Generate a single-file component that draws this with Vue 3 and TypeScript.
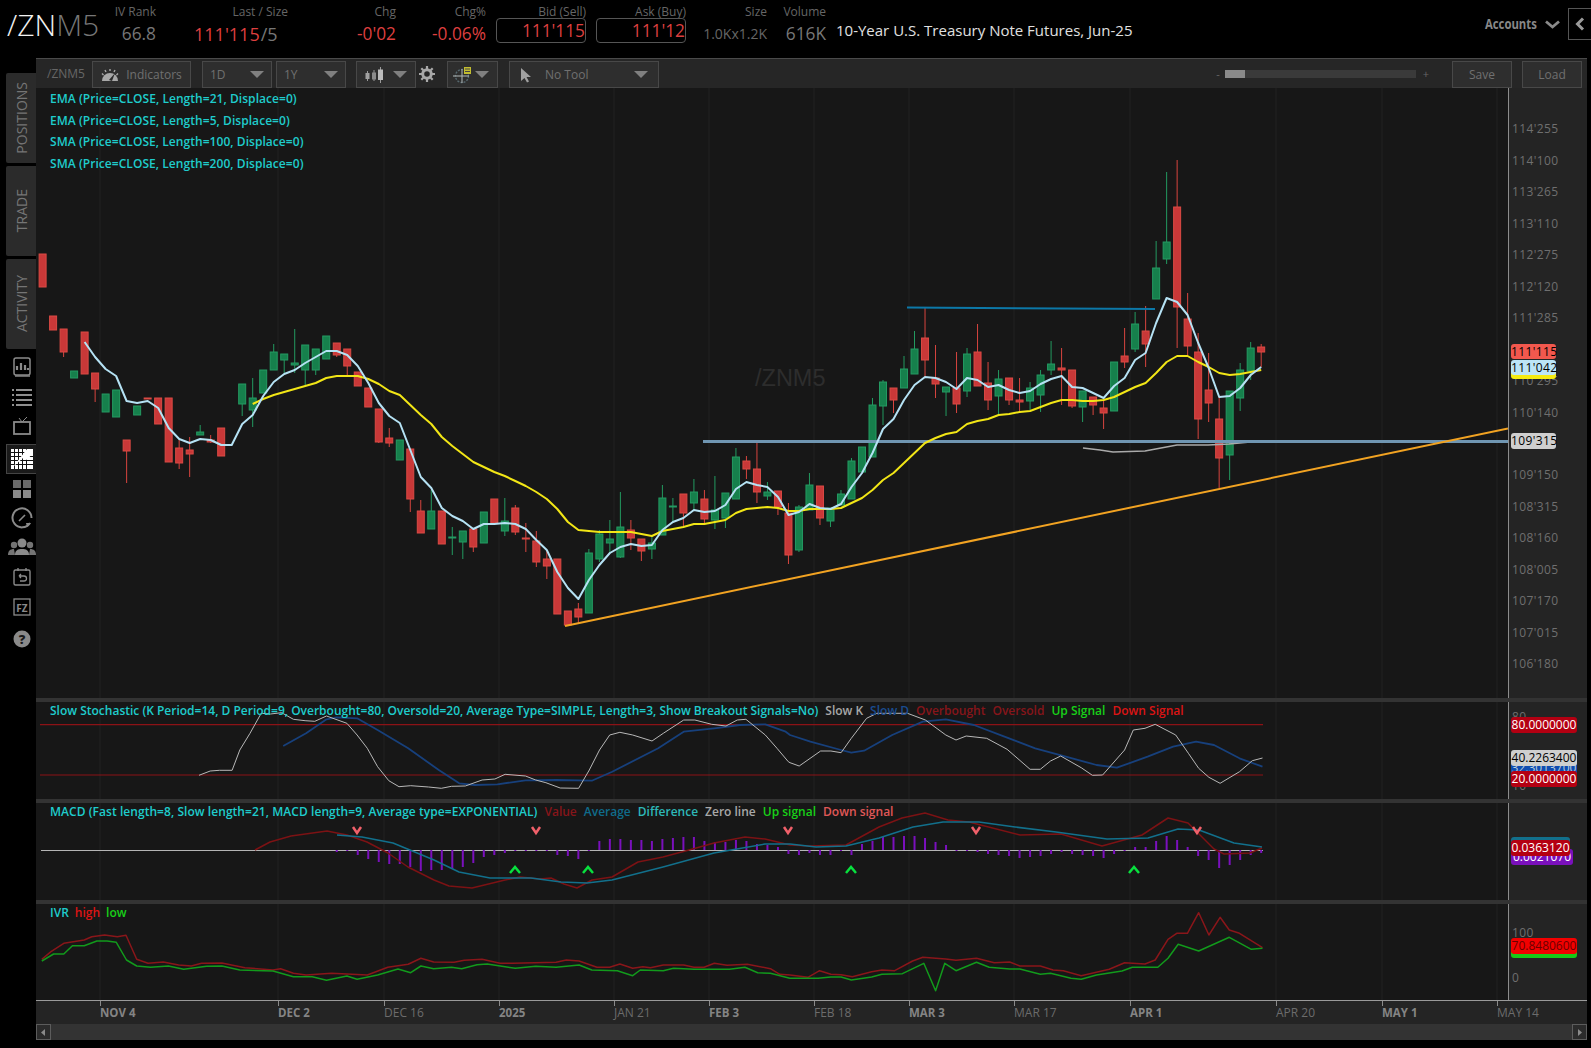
<script setup lang="ts">
type Candle = [number, number, number, number, 'r' | 'g'] | null

// high, body top, body bottom, low, colour — index is the bar number
const bars: Candle[] = [
  [254, 254, 287, 287, 'r'], [316, 316, 330, 330, 'r'], [329, 329, 352, 357, 'r'], [371, 371, 378, 378, 'g'],
  [332, 332, 374, 374, 'r'], [373, 373, 389, 402, 'r'], [394, 394, 412, 412, 'g'], [390, 390, 417, 417, 'g'],
  [440, 440, 451, 483, 'r'], [406, 406, 415, 415, 'g'], [398, 398, 399, 399, 'r'], [398, 398, 424, 424, 'r'],
  [398, 398, 462, 462, 'r'], [440, 448, 463, 469, 'r'], [437, 450, 454, 477, 'r'], [425, 432, 435, 435, 'g'],
  [435, 440, 442, 443, 'r'], [428, 428, 456, 456, 'r'], null, [384, 384, 404, 416, 'g'],
  [378, 398, 410, 427, 'g'], [370, 370, 393, 393, 'g'], [344, 352, 370, 370, 'g'], [354, 354, 360, 373, 'g'],
  [329, 363, 365, 373, 'g'], [345, 345, 370, 385, 'g'], [349, 349, 370, 375, 'g'], [336, 336, 359, 359, 'g'],
  [343, 343, 355, 357, 'r'], [349, 349, 366, 377, 'r'], [372, 372, 386, 386, 'r'], [388, 388, 407, 407, 'r'],
  [409, 409, 442, 443, 'r'], [428, 438, 443, 447, 'r'], [440, 440, 460, 460, 'g'], [449, 449, 499, 512, 'r'],
  [500, 511, 533, 533, 'r'], [490, 511, 529, 529, 'g'], [511, 511, 544, 544, 'r'], [527, 537, 538, 555, 'g'],
  [531, 531, 542, 559, 'g'], [529, 529, 547, 552, 'r'], [512, 512, 543, 543, 'g'], [499, 499, 523, 523, 'r'],
  [498, 521, 531, 536, 'g'], [505, 508, 532, 535, 'r'], [523, 538, 539, 552, 'r'], [531, 541, 562, 567, 'r'],
  [550, 559, 566, 579, 'r'], [559, 559, 614, 614, 'r'], [611, 611, 625, 625, 'r'], [603, 609, 617, 623, 'r'],
  [549, 553, 613, 613, 'g'], [530, 534, 559, 562, 'g'], [520, 539, 543, 553, 'g'], [492, 527, 557, 558, 'g'],
  [520, 530, 538, 550, 'r'], [539, 539, 551, 561, 'r'], [535, 543, 549, 559, 'g'], [485, 498, 535, 535, 'g'],
  [498, 506, 507, 522, 'g'], [494, 494, 513, 527, 'r'], [479, 492, 503, 510, 'g'], [490, 499, 519, 523, 'r'],
  [476, 510, 520, 529, 'g'], [493, 493, 518, 528, 'g'], [448, 457, 499, 499, 'g'], [456, 461, 469, 479, 'r'],
  [441, 469, 492, 503, 'r'], [482, 492, 496, 500, 'g'], [491, 491, 507, 515, 'r'], [503, 513, 555, 564, 'r'],
  [505, 507, 550, 552, 'g'], [473, 485, 510, 510, 'g'], [486, 486, 518, 525, 'r'], [508, 508, 521, 527, 'g'],
  [490, 494, 505, 505, 'g'], [458, 461, 499, 499, 'g'], [447, 447, 472, 472, 'g'], [398, 405, 457, 457, 'g'],
  [380, 382, 406, 425, 'g'], [388, 388, 400, 413, 'r'], [356, 369, 388, 388, 'g'], [331, 349, 374, 374, 'g'],
  [308, 338, 360, 378, 'r'], [345, 378, 384, 398, 'r'], [387, 387, 392, 416, 'g'], [352, 388, 404, 413, 'r'],
  [348, 354, 391, 397, 'g'], [324, 352, 386, 386, 'r'], [362, 383, 400, 410, 'r'], [370, 379, 396, 415, 'g'],
  [378, 378, 400, 405, 'r'], [378, 400, 402, 412, 'r'], [382, 388, 401, 410, 'g'], [370, 375, 395, 412, 'g'],
  [341, 364, 370, 375, 'g'], [348, 368, 370, 405, 'r'], [370, 370, 406, 408, 'r'], [391, 391, 407, 422, 'g'],
  [397, 397, 405, 415, 'r'], [400, 408, 413, 429, 'r'], [362, 362, 411, 411, 'g'], [328, 356, 362, 368, 'r'],
  [312, 324, 349, 352, 'g'], [306, 331, 344, 367, 'r'], [241, 268, 299, 299, 'g'], [172, 242, 259, 264, 'g'],
  [160, 207, 307, 348, 'r'], [293, 319, 346, 355, 'r'], [333, 352, 419, 439, 'r'], [353, 390, 403, 422, 'r'],
  [397, 419, 458, 488, 'r'], [391, 391, 455, 480, 'g'], [363, 370, 398, 411, 'g'], [342, 348, 371, 380, 'g'],
  [344, 347, 352, 367, 'r'],
]

const barX = (i: number) => 42.6 + i * 10.505

const ema5 = [
  342, 357, 369, 376, 401, 403, 401, 408, 428, 439, 443, 439, 440, 445, 445, 424, 415, 396, 382, 374, 370, 363, 357, 351,
  351, 355, 366, 383, 403, 416, 423, 450, 477, 488, 508, 516, 521, 529, 524, 524, 523, 524, 529, 540, 550, 572, 588, 599,
  580, 565, 553, 547, 544, 546, 545, 530, 522, 518, 510, 512, 511, 505, 489, 482, 485, 487, 497, 515, 512, 504, 508, 509,
  504, 487, 473, 453, 429, 419, 400, 385, 377, 378, 382, 389, 378, 380, 387, 385, 390, 393, 391, 384, 379, 376, 387, 388,
  393, 398, 386, 378, 360, 353, 323, 298, 302, 315, 343, 368, 397, 396, 388, 375, 367,
]
const ema21 = [
  404, 399, 395, 392, 389, 386, 383, 378, 376, 376, 376, 379, 384, 391, 395, 405, 415, 424, 437, 446, 454, 462, 467, 472,
  476, 481, 486, 492, 499, 509, 522, 530, 531, 532, 532, 532, 532, 534, 536, 531, 529, 527, 524, 524, 522, 520, 513, 509,
  508, 507, 508, 511, 511, 509, 509, 509, 508, 503, 498, 490, 480, 473, 463, 453, 443, 438, 434, 432, 424, 421, 419, 415,
  414, 412, 411, 407, 403, 400, 400, 401, 401, 400, 397, 392, 387, 383, 373, 362, 356, 356, 362, 367, 373, 375, 374, 372, 370,
]

const seriesPath = (ys: number[], from: number) => ys.map((y, i) => `${barX(from + i).toFixed(1)},${y}`).join(' ')
const ema5Path = seriesPath(ema5, 4)
const ema21Path = seriesPath(ema21, 20)

// studies were traced off 3x crops, so the numbers come in crop units
type Pt = [number, number]
const fromCrop = (pts: Pt[], x0: number, sx: number, y0: number) =>
  pts.map(([x, y]) => `${(x0 + x / sx).toFixed(1)},${(y0 + y / 3).toFixed(1)}`).join(' ')

const stochK = fromCrop([[390,256],[412,243],[430,241],[455,241],[470,180],[490,130],[512,70],[530,72],[552,68],[575,88],[598,92],[617,94],[640,78],[680,100],[700,135],[720,175],[740,230],[762,272],[782,290],[805,287],[840,291],[865,295],[885,289],[912,288],[945,270],[970,267],[990,253],[1030,258],[1050,270],[1070,278],[1098,294],[1134,295],[1155,240],[1175,180],[1195,135],[1215,127],[1240,135],[1278,153],[1300,130],[1340,90],[1362,90],[1395,103],[1423,108],[1445,90],[1462,88],[1500,135],[1523,175],[1545,215]], 0, 1.96, 690)
  + ' ' + fromCrop([[0,218],[18,228],[60,183],[80,183],[100,188],[120,145],[150,85],[170,70],[230,70],[265,90],[305,135],[325,150],[345,138],[385,145],[425,178],[470,238],[490,238],[510,213],[530,198],[570,233],[592,256],[612,255],[655,180],[672,120],[695,115],[715,103],[755,135],[780,190],[800,235],[820,262],[842,280],[880,245],[905,212],[925,204]], 790, 1.9576, 690)
const stochD = fromCrop([[555,168],[600,130],[640,88],[660,82],[700,85],[740,120],[800,175],[860,240],[900,280],[930,285],[975,283],[1030,271],[1090,270],[1160,272],[1200,245],[1290,175],[1340,125],[1400,115],[1450,105],[1500,103],[1540,125]], 0, 1.96, 690)
  + ' ' + fromCrop([[0,135],[40,155],[100,180],[120,188],[145,182],[200,135],[260,95],[305,88],[360,105],[420,140],[480,175],[540,200],[600,225],[640,233],[700,200],[750,170],[795,155],[830,165],[880,205],[925,230]], 790, 1.9576, 690)

const macdValue = '255,850 270,842 291,836 327,831 347,835 367,842 388,853 408,867 434,880 449,886 472,888 505,880 520,877 540,879 551,878 564,884 577,888 592,880 612,877 638,862 663,857 689,850 714,843 745,837 765,839 790,845 810,846 846,845 879,827 902,818 925,813 948,820 969,822 1020,835 1061,834 1102,846 1142,835 1168,818 1188,823 1214,849 1224,854 1250,853 1262,848'
const macdAvg = '337,835 362,837 393,843 434,860 459,872 490,878 531,878 561,882 587,883 612,880 663,867 714,853 765,844 790,844 816,847 846,846 879,838 913,827 943,822 979,822 1015,827 1056,832 1107,839 1148,838 1178,829 1199,830 1234,843 1262,847'

// histogram from bar 28: positive hangs below the zero line
const histo = [
  2, 1, 5, 9, 12, 14, 14, 17, 21, 20, 20, 19, 17, 13, 7, 5, 3, 0, 1, 0, 0, 5, 6, 9, 1,
  -9, -11, -11, -10, -10, -9, -11, -12, -13, -13, -9, -8, -8, -10, -9, -6, -5, -3, 4, 5, 3, 5, 5, 1, 5,
  -6, -9, -13, -13, -14, -14, -12, -8, -5, 0, 0, 2, 4, 5, 6, 8, 7, 6, 4, 2, 4, 5, 6, 8, 4, 0,
  -3, -3, -9, -14, -10, -3, 6, 10, 18, 15, 10, 5, 3,
]
const histoBars = histo.map((h, i) => ({ x: barX(28 + i) - 1, y: h < 0 ? 850 + h : 850, h: Math.max(Math.abs(h), 1) }))

const downMarks = [[357, 830], [536, 830], [788, 830], [976, 830], [1197, 830]]
const upMarks = [[515, 870], [588, 870], [851, 870], [1134, 870]]

const ivrHigh = fromCrop([[82,238],[100,215],[125,190],[165,180],[180,170],[205,165],[230,170],[247,166],[268,238],[290,250],[320,246],[350,255],[375,258],[395,250],[435,249],[480,263],[535,270],[550,266],[575,280],[600,285],[650,280],[720,285],[760,262],[800,253],[825,235],[850,246],[890,247],[910,241],[945,238],[980,250],[1005,250],[1090,247],[1110,240],[1135,243],[1170,262],[1195,262],[1215,252],[1240,265],[1260,260],[1275,263],[1300,255],[1340,255],[1360,262],[1380,262],[1400,250],[1425,256],[1465,253],[1510,266]], 0, 1.96, 880)
  + ' ' + fromCrop([[-20,283],[0,285],[35,292],[58,272],[80,283],[100,284],[122,290],[160,275],[180,270],[205,272],[240,243],[260,232],[305,237],[325,241],[365,235],[400,248],[430,246],[450,258],[490,258],[515,270],[535,272],[570,287],[625,268],[655,248],[695,252],[715,240],[740,178],[757,160],[778,160],[800,98],[820,165],[842,112],[860,150],[880,160],[925,203]], 790, 1.9576, 880)
const ivrLow = fromCrop([[82,243],[105,222],[125,222],[142,197],[165,197],[190,183],[210,183],[228,187],[248,240],[268,258],[295,262],[330,258],[360,268],[405,259],[435,258],[470,270],[535,273],[575,290],[612,290],[640,301],[680,288],[700,298],[740,285],[780,267],[805,278],[825,258],[850,266],[885,262],[905,266],[935,254],[955,252],[1010,265],[1050,259],[1090,262],[1135,255],[1160,270],[1210,272],[1240,287],[1255,270],[1300,272],[1320,265],[1360,268],[1430,268],[1460,262],[1485,278],[1510,280],[1548,295]], 0, 1.96, 880)
  + ' ' + fromCrop([[0,295],[55,295],[80,291],[100,291],[120,300],[160,291],[180,283],[220,281],[262,250],[285,332],[303,250],[325,272],[365,247],[390,262],[430,267],[450,267],[490,283],[510,280],[550,295],[570,298],[600,285],[650,273],[670,262],[720,262],[740,235],[760,193],[800,213],[860,172],[903,208],[925,205]], 790, 1.9576, 880)

const dates = [
  { x: 100, label: 'NOV 4', bold: true }, { x: 278, label: 'DEC 2', bold: true }, { x: 384, label: 'DEC 16', bold: false },
  { x: 499, label: '2025', bold: true }, { x: 614, label: 'JAN 21', bold: false }, { x: 709, label: 'FEB 3', bold: true },
  { x: 814, label: 'FEB 18', bold: false }, { x: 909, label: 'MAR 3', bold: true }, { x: 1014, label: 'MAR 17', bold: false },
  { x: 1130, label: 'APR 1', bold: true }, { x: 1276, label: 'APR 20', bold: false }, { x: 1382, label: 'MAY 1', bold: true },
  { x: 1497, label: 'MAY 14', bold: false },
]

const prices: [string, number][] = [
  ["114'255", 129], ["114'100", 161], ["113'265", 192], ["113'110", 224], ["112'275", 255], ["112'120", 287],
  ["111'285", 318], ["110'295", 381], ["110'140", 413], ["109'150", 475], ["108'315", 507], ["108'160", 538],
  ["108'005", 570], ["107'170", 601], ["107'015", 633], ["106'180", 664],
]

const emaLegends = [
  'EMA (Price=CLOSE, Length=21, Displace=0)',
  'EMA (Price=CLOSE, Length=5, Displace=0)',
  'SMA (Price=CLOSE, Length=100, Displace=0)',
  'SMA (Price=CLOSE, Length=200, Displace=0)',
]
const railTabs = ['POSITIONS', 'TRADE', 'ACTIVITY']
</script>

<template>
  <div class="app">
    <header class="top">
      <div class="sym"><span class="sym-a">/ZN</span><span class="sym-b">M5</span></div>
      <div class="q q-iv"><span class="lab">IV Rank</span><span class="val">66.8</span></div>
      <div class="q q-last">
        <span class="lab">Last / Size</span>
        <span class="val val-last last-row"><span class="red">111'115</span><span class="slash">/5</span></span>
      </div>
      <div class="q q-chg"><span class="lab">Chg</span><span class="val red">-0'02</span></div>
      <div class="q q-pct"><span class="lab">Chg%</span><span class="val red">-0.06%</span></div>
      <div class="q q-box"><span class="lab">Bid (Sell)</span><span class="val red box">111'115</span></div>
      <div class="q q-box"><span class="lab">Ask (Buy)</span><span class="val red box">111'12</span></div>
      <div class="q q-size"><span class="lab">Size</span><span class="val small">1.0Kx1.2K</span></div>
      <div class="q q-vol"><span class="lab">Volume</span><span class="val">616K</span></div>
      <div class="desc">10-Year U.S. Treasury Note Futures, Jun-25</div>
      <div class="accounts">
        <span class="accounts-text">Accounts</span>
        <svg width="15" height="9" viewBox="0 0 15 9"><path d="M1 1.500 7.500 7 14 1.500" fill="none" stroke="#8a8a8a" stroke-width="2.800" /></svg>
      </div>
      <div class="collapse">
        <svg width="10" height="14" viewBox="0 0 10 14"><path d="M8 1.500 2.500 7 8 12.500" fill="none" stroke="#9a9a9a" stroke-width="3" /></svg>
      </div>
    </header>

    <div class="body">
      <nav class="rail">
        <div v-for="t in railTabs" :key="t" class="tab" :class="'tab-' + t.toLowerCase()"><span>{{ t }}</span></div>
        <svg class="ico" viewBox="0 0 24 24"><rect x="4" y="3" width="16" height="17" rx="2" fill="none" stroke="#8a8a8a" stroke-width="1.500" /><path d="M7 15v-4M11 15V8M15 15v-5M18 15v-2" stroke="#8a8a8a" stroke-width="2.200" /><path d="M5 21h15" stroke="#8a8a8a" stroke-width="1.500" /></svg>
        <svg class="ico" viewBox="0 0 24 24"><path d="M6 5h16M6 10h16M6 15h16M6 20h16" stroke="#8f8f8f" stroke-width="2" /><path d="M2 5h2M2 10h2M2 15h2M2 20h2" stroke="#8f8f8f" stroke-width="2" /></svg>
        <svg class="ico" viewBox="0 0 24 24"><rect x="4" y="8" width="16" height="12" fill="none" stroke="#8a8a8a" stroke-width="1.800" /><path d="M12 8 9 4M12 8l5-5" stroke="#8a8a8a" /></svg>
        <div class="ico-active">
          <svg width="22" height="20" viewBox="0 0 22 20"><rect width="22" height="20" fill="#fff" /><path d="M3.500 0v20M7.500 0v20M11.500 0v20M15.500 0v20M0 3.500h22M0 7.500h22M0 11.500h22M0 15.500h22" stroke="#111" /><path d="M2 18 12 9l4 2 6-7v-4h-6z" fill="#fff" /></svg>
        </div>
        <svg class="ico" viewBox="0 0 24 24"><rect x="3" y="3" width="8" height="8" fill="#6a6a6a" /><rect x="13" y="3" width="8" height="8" fill="#6a6a6a" /><rect x="3" y="13" width="8" height="8" fill="#8a8a8a" /><rect x="13" y="13" width="8" height="8" fill="#8a8a8a" /></svg>
        <svg class="ico" viewBox="0 0 24 24"><path d="M20 17A9.500 9.500 0 1 1 21.500 12" fill="none" stroke="#8a8a8a" stroke-width="2" /><path d="M17 21l4-4h-5z" fill="#8a8a8a" /><path d="M12 12 9 15M12 12l3-3" stroke="#8a8a8a" stroke-width="1.600" /></svg>
        <svg class="ico ico-wide" viewBox="0 0 28 24"><circle cx="14" cy="7" r="4.500" fill="#8a8a8a" /><path d="M7 19c0-5 3-6 7-6s7 1 7 6z" fill="#8a8a8a" /><circle cx="6" cy="9" r="3.200" fill="#747474" /><circle cx="22" cy="9" r="3.200" fill="#747474" /><path d="M0 19c0-4 2-6 6-6l1 6zM28 19c0-4-2-6-6-6l-1 6z" fill="#747474" /></svg>
        <svg class="ico" viewBox="0 0 24 24"><rect x="4" y="5" width="16" height="15" rx="1.500" fill="none" stroke="#8a8a8a" stroke-width="1.400" /><path d="M8 3v3M16 3v3" stroke="#8a8a8a" stroke-width="1.400" /><path d="M9 11h5a2.500 2.500 0 0 1 0 5h-4M9 11l2-2M9 11l2 2" fill="none" stroke="#8a8a8a" stroke-width="1.300" /></svg>
        <svg class="ico ico-fz" viewBox="0 0 24 24"><rect x="4" y="4" width="16" height="16" fill="none" stroke="#8a8a8a" stroke-width="1.300" /><text x="12" y="16.500" text-anchor="middle" class="ico-text">FZ</text></svg>
        <svg class="ico" viewBox="0 0 24 24"><circle cx="12" cy="12" r="8.500" fill="#8a8a8a" /><text x="12" y="16.500" text-anchor="middle" class="ico-help">?</text></svg>
      </nav>

      <main class="frame">
        <div class="toolbar">
          <span class="tb-sym">/ZNM5</span>
          <button class="btn btn-ind">
            <svg width="18" height="16" viewBox="0 0 18 16"><path d="M1 14a8 8 0 0 1 16 0z" fill="#a8a8a8" /><path d="M2.500 8 1 6.500M5 5 4 3M9 4V2M13 5l1-2M15.500 8 17 6.500" stroke="#a8a8a8" stroke-width="1.400" /><path d="M8 13l6-7-3 8z" fill="#2a2a2a" /></svg>
            Indicators
          </button>
          <div class="dd dd-period">1D<i /></div>
          <div class="dd dd-period dd-next">1Y<i /></div>
          <div class="dd dd-type">
            <svg width="19" height="16" viewBox="0 0 19 16"><path d="M2.500 4v10M9 3v11M15.500 0v16" stroke="#9a9a9a" /><rect x="0.500" y="6" width="4" height="6" fill="#a0a0a0" /><rect x="7" y="5.500" width="4" height="7" fill="#8c8c8c" /><rect x="13" y="2.500" width="5" height="10.500" fill="#bcbcbc" /></svg>
            <i />
          </div>
          <svg class="gear" width="16" height="16" viewBox="0 0 16 16"><circle cx="8" cy="8" r="4.300" fill="none" stroke="#a8a8a8" stroke-width="3" /><path d="M8 0v3M8 13v3M0 8h3M13 8h3M2.300 2.300l2 2M11.700 11.700l2 2M2.300 13.700l2-2M11.700 4.300l2-2" stroke="#a8a8a8" stroke-width="2.200" /></svg>
          <div class="dd dd-draw">
            <svg width="20" height="18" viewBox="0 0 20 18"><circle cx="9" cy="10" r="6.500" fill="none" stroke="#56686f" stroke-width="1.400" stroke-dasharray="2 1.200" /><path d="M0 10h16M9 3v14" stroke="#b0b8b8" /><rect x="11" y="1" width="7" height="7" fill="#c2bd30" /><path d="M12 3h5M12 5.500h5" stroke="#444" /></svg>
            <i />
          </div>
          <div class="dd dd-tool">
            <svg width="14" height="16" viewBox="0 0 14 16"><path d="M2 1v13l3.500-3 2.500 4.500 2-1-2.500-4.500H12z" fill="#a0a0a0" /></svg>
            <span>No Tool</span><i />
          </div>
          <div class="spacer" />
          <span class="zoom-sign">-</span>
          <div class="zoom-track"><div class="zoom-thumb" /></div>
          <span class="zoom-sign zoom-plus">+</span>
          <button class="btn btn-save">Save</button>
          <button class="btn btn-load">Load</button>
        </div>

        <section class="pane pane-main">
          <div class="plot">
            <svg class="canvas" viewBox="36 88 1472 610" width="1472" height="610">
              <line v-for="d in dates" :key="d.label" :x1="d.x" :x2="d.x" y1="88" y2="698" class="grid" />
              <text x="755" y="386" class="mark">/ZNM5</text>
              <template v-for="(b, i) in bars" :key="i">
                <g v-if="b" :class="b[4] === 'r' ? 'c-red' : 'c-green'">
                  <line :x1="barX(i)" :x2="barX(i)" :y1="b[0]" :y2="b[3]" />
                  <rect :x="barX(i) - 3.500" :y="b[1]" width="7" :height="Math.max(b[2] - b[1], 1)" />
                </g>
              </template>
              <polyline points="1083,448 1100,450 1113,452 1145,451 1177,445 1208,445 1229,444 1261,441" class="l-sma" />
              <line x1="703" x2="1508" y1="441.500" y2="441.500" class="l-level" />
              <line x1="907" x2="1155" y1="307.500" y2="309" class="l-top" />
              <line x1="565" x2="1508" y1="626" y2="428.500" class="l-trend" />
              <polyline :points="ema21Path" class="l-ema21" />
              <polyline :points="ema5Path" class="l-ema5" />
            </svg>
            <div class="legend-stack">
              <div v-for="l in emaLegends" :key="l">{{ l }}</div>
            </div>
          </div>
          <div class="axis">
            <span v-for="[p, y] in prices" :key="p" class="tick" :style="{ top: y - 88 - 9 + 'px' }">{{ p }}</span>
            <span class="badge b-yellow" />
            <span class="badge b-red">111'115</span>
            <span class="badge b-blue">111'042</span>
            <span class="badge b-gray">109'315</span>
          </div>
        </section>

        <section class="pane pane-study">
          <div class="plot">
            <svg class="canvas" viewBox="36 702 1472 97" width="1472" height="97">
              <line v-for="d in dates" :key="d.label" :x1="d.x" :x2="d.x" y1="702" y2="799" class="grid" />
              <line x1="40" x2="1263" y1="724.700" y2="724.700" class="l-band" />
              <line x1="40" x2="1263" y1="775" y2="775" class="l-band" />
              <polyline :points="stochD" class="l-slowd" />
              <polyline :points="stochK" class="l-slowk" />
            </svg>
            <div class="legend legend-stoch">
              <span class="cy">Slow Stochastic (K Period=14, D Period=9, Overbought=80, Oversold=20, Average Type=SIMPLE, Length=3, Show Breakout Signals=No)</span>
              <span class="k-gray">Slow K</span><span class="k-blue">Slow D</span><span class="k-dred">Overbought</span><span class="k-dred">Oversold</span><span class="k-green">Up Signal</span><span class="k-red">Down Signal</span>
            </div>
          </div>
          <div class="axis">
            <span class="tick tick-low" style="top: 6px">80</span>
            <span class="tick tick-low" style="top: 75px">10</span>
            <span class="vbadge v-red" style="top: 15px">80.0000000</span>
            <span class="vbadge v-blue" style="top: 58px">32.3013700</span>
            <span class="vbadge v-red" style="top: 69px">20.0000000</span>
            <span class="vbadge v-gray" style="top: 48px">40.2263400</span>
          </div>
        </section>

        <section class="pane pane-study">
          <div class="plot">
            <svg class="canvas" viewBox="36 803 1472 97" width="1472" height="97">
              <line v-for="d in dates" :key="d.label" :x1="d.x" :x2="d.x" y1="803" y2="900" class="grid" />
              <line x1="41" x2="1263" y1="850.500" y2="850.500" class="l-zero" />
              <rect v-for="(h, i) in histoBars" :key="i" :x="h.x" :y="h.y" width="2" :height="h.h" class="histo" />
              <polyline :points="macdValue" class="l-value" />
              <polyline :points="macdAvg" class="l-avg" />
              <path v-for="[x, y] in downMarks" :key="x" :d="`M${x - 4} ${y - 3}l4 6 4-6`" class="m-down" />
              <path v-for="[x, y] in upMarks" :key="x" :d="`M${x - 5} ${y + 3}l5-6 5 6`" class="m-up" />
            </svg>
            <div class="legend legend-macd">
              <span class="cy">MACD (Fast length=8, Slow length=21, MACD length=9, Average type=EXPONENTIAL)</span>
              <span class="k-dred">Value</span><span class="k-teal">Average</span><span class="k-aqua">Difference</span><span class="k-gray">Zero line</span><span class="k-green">Up signal</span><span class="k-pink">Down signal</span>
            </div>
          </div>
          <div class="axis">
            <span class="vbadge v-teal" style="top: 34px" />
            <span class="vbadge v-purple" style="top: 46px">0.0021070</span>
            <span class="vbadge v-dark" style="top: 37px">0.0363120</span>
          </div>
        </section>

        <section class="pane pane-ivr">
          <div class="plot">
            <svg class="canvas" viewBox="36 904 1472 96" width="1472" height="96">
              <line v-for="d in dates" :key="d.label" :x1="d.x" :x2="d.x" y1="904" y2="1000" class="grid" />
              <polyline :points="ivrHigh" class="l-ivrh" />
              <polyline :points="ivrLow" class="l-ivrl" />
            </svg>
            <div class="legend legend-ivr">
              <span class="cy">IVR</span><span class="k-red">high</span><span class="k-green">low</span>
            </div>
          </div>
          <div class="axis">
            <span class="tick tick-low" style="top: 20px">100</span>
            <span class="tick tick-low" style="top: 65px">0</span>
            <span class="vbadge v-lime" style="top: 36px" />
            <span class="vbadge v-bright" style="top: 34px">70.8480600</span>
          </div>
        </section>

        <div class="dates">
          <template v-for="d in dates" :key="d.label">
            <i class="date-tick" :style="{ left: d.x - 36 + 'px' }" />
            <span class="date" :class="{ 'date-b': d.bold }" :style="{ left: d.x - 36 + 'px' }">{{ d.label }}</span>
          </template>
        </div>

        <div class="scroll">
          <span class="scroll-btn"><svg width="5" height="7" viewBox="0 0 5 7"><path d="M4 0v7L0 3.500z" fill="#8a8a8a" /></svg></span>
          <span class="scroll-btn"><svg width="5" height="7" viewBox="0 0 5 7"><path d="M1 0v7l4-3.500z" fill="#8a8a8a" /></svg></span>
        </div>
      </main>
    </div>
  </div>
</template>

<style>
html, body { background: #000; }
</style>

<style scoped>
.app {
  width: 1591px;
  height: 1048px;
  overflow: hidden;
  background: #000;
  display: flex;
  flex-direction: column;
  font-family: "Open Sans", "Liberation Sans", sans-serif;
  color: #777;
}

/* header strip */
.top { height: 58px; flex: none; display: flex; align-items: flex-start; position: relative; }
.sym { width: 110px; padding: 4px 0 0 7px; box-sizing: border-box; font-size: 30px; font-weight: 300; line-height: 42px; }
.sym-a { color: #f2f2f2; }
.sym-b { color: #777; }
.q { display: flex; flex-direction: column; align-items: flex-end; padding-top: 4px; box-sizing: border-box; }
.lab { font-size: 12px; line-height: 16px; color: #666; }
.val { font-size: 17.300px; line-height: 26px; color: #777; margin-top: 1px; }
.val-last { font-size: 18px; }
.red { color: #dd3f3f; }
.q-iv { width: 46px; }
.q-last { width: 132px; }
.last-row { display: flex; width: 94px; gap: 0; align-items: baseline; }
.slash { color: #777; margin-left: 1px; }
.q-chg { width: 108px; }
.q-pct { width: 90px; }
.q-box { width: 100px; }
.box {
  width: 90px;
  height: 25px;
  box-sizing: border-box;
  border: 1px solid #555;
  border-radius: 4px;
  text-align: right;
  line-height: 23px;
  margin-top: -2px;
}
.q-size { width: 81px; }
.small { font-size: 14px; line-height: 26px; color: #666; }
.q-vol { width: 59px; }
.desc { margin: 20px 0 0 10px; font-size: 15px; line-height: 20px; color: #e0e0e0; white-space: nowrap; }
.accounts {
  margin: 14px 0 0 auto;
  display: flex;
  align-items: center;
  gap: 8px;
  font-size: 13.500px;
  font-weight: 700;
  color: #888;
  line-height: 20px;
}
/* the original face is narrower than anything installed */
.accounts-text { display: inline-block; transform: scaleX(0.84); transform-origin: right center; }
.collapse {
  width: 22px;
  height: 30px;
  margin: 8px 0 0 8px;
  border: 1px solid #555;
  border-right: 0;
  display: flex;
  align-items: center;
  justify-content: center;
}

.body { flex: none; display: flex; height: 982px; }

/* left rail */
.rail { width: 36px; flex: none; display: flex; flex-direction: column; align-items: flex-end; padding-top: 15px; }
.tab {
  width: 30px;
  margin-bottom: 3px;
  background: #2b2b2b;
  border-radius: 2px 0 0 2px;
  display: flex;
  align-items: center;
  justify-content: center;
  font-size: 14px;
  color: #757575;
  box-sizing: border-box;
}
.tab span { writing-mode: vertical-rl; transform: rotate(180deg); }
.tab-positions { height: 90px; }
.tab-trade { height: 90px; }
.tab-activity { height: 90px; margin-bottom: 6px; }
.ico { width: 24px; height: 24px; margin: 0 2px 5.500px 0; flex: none; }
.ico-wide { width: 28px; margin-right: 0; }
.ico-fz { margin-bottom: 8.200px; }
.ico-text { font-size: 10px; font-weight: 700; fill: #8a8a8a; }
.ico-help { font-size: 13px; font-weight: 800; fill: #1a1a1a; }
.ico-active {
  width: 30px;
  height: 30px;
  box-sizing: border-box;
  border: 1px solid #444;
  border-right: 0;
  background: #1a1a1a;
  display: flex;
  align-items: center;
  justify-content: center;
  margin-bottom: 3px;
  flex: none;
}

/* chart frame */
.frame { width: 1551px; flex: none; display: flex; flex-direction: column; background: #171717; }
.toolbar {
  height: 30px;
  flex: none;
  box-sizing: border-box;
  border-top: 1px solid #4a4a4a;
  background: #262626;
  display: flex;
  align-items: flex-start;
  padding: 2px 5px 0 11px;
  font-size: 12px;
  color: #707070;
}
.tb-sym { width: 45px; line-height: 26px; flex: none; color: #666; }
.btn {
  height: 27px;
  box-sizing: border-box;
  background: #2e2e2e;
  border: 1px solid #484848;
  color: #707070;
  font: inherit;
  padding: 0;
  display: flex;
  align-items: center;
  justify-content: center;
  flex: none;
}
.btn-ind { width: 99px; gap: 7px; }
.btn-save { width: 60px; margin-left: 19px; }
.btn-load { width: 60px; margin-left: 10px; }
.dd {
  height: 27px;
  box-sizing: border-box;
  background: #2e2e2e;
  border: 1px solid #484848;
  display: flex;
  align-items: center;
  justify-content: space-between;
  padding: 0 7px;
  flex: none;
}
.dd i { width: 0; height: 0; border-left: 7px solid transparent; border-right: 7px solid transparent; border-top: 7px solid #808080; }
.dd-period { width: 70px; margin-left: 11px; }
.dd-next { margin-left: 4px; }
.dd-type { width: 60px; margin-left: 10px; padding: 0 8px 0 8px; }
.gear { margin: 5px 12px 0 3px; flex: none; }
.dd-draw { width: 51px; padding: 0 8px 0 5px; }
.dd-tool { width: 150px; margin-left: 11px; padding: 0 10px 0 9px; }
.dd-tool span { margin-left: 12px; margin-right: auto; }
.spacer { flex: 1; }
.zoom-sign { width: 14px; line-height: 26px; font-size: 11px; color: #666; text-align: center; flex: none; }
.zoom-track { width: 191px; height: 8px; margin-top: 9px; background: #3a3a3a; flex: none; }
.zoom-thumb { width: 20px; height: 8px; background: #8a8a8a; }
.zoom-plus { margin-left: 3px; }

.pane { display: grid; grid-template-columns: 1472px 79px; flex: none; }
.pane-main { height: 610px; }
.pane-study { height: 97px; border-top: 4px solid #333; }
.pane-ivr { height: 96px; border-top: 4px solid #333; }
.plot { position: relative; overflow: hidden; }
.canvas { display: block; }
.axis {
  position: relative;
  background: #242424;
  border-left: 1px solid #8c8c8c;
  overflow: hidden;
}
.grid { stroke: #232323; }
.mark { font: 23.500px "Liberation Sans", sans-serif; fill: #2d2d2d; }
.c-red line { stroke: #d8453f; }
.c-red rect { fill: #c93838; stroke: #db4a44; }
.c-green line { stroke: #239a60; }
.c-green rect { fill: #16804c; stroke: #249a62; }
polyline { fill: none; stroke-linejoin: round; }
.l-ema5 { stroke: #b5e2f4; stroke-width: 2; }
.l-ema21 { stroke: #f2e616; stroke-width: 2; }
.l-sma { stroke: #aaa; stroke-width: 1.500; }
.l-level { stroke: #7096b2; stroke-width: 3; }
.l-top { stroke: #0c78a8; stroke-width: 2; }
.l-trend { stroke: #f2a322; stroke-width: 2; }
.l-band { stroke: #8c1216; stroke-width: 1.200; }
.l-slowk { stroke: #b8b8b8; stroke-width: 1; }
.l-slowd { stroke: #17407c; stroke-width: 1.800; }
.l-zero { stroke: #b5b5b5; stroke-width: 1; }
.histo { fill: #7a10bc; }
.l-value { stroke: #7c1214; stroke-width: 1.500; }
.l-avg { stroke: #12708c; stroke-width: 1.500; }
.m-down { fill: none; stroke: #f0606a; stroke-width: 2.500; }
.m-up { fill: none; stroke: #08e03e; stroke-width: 2.500; }
.l-ivrh { stroke: #8a161a; stroke-width: 1.500; }
.l-ivrl { stroke: #129a1c; stroke-width: 1.500; }

/* study captions sit over the plot */
.legend-stack {
  position: absolute;
  left: 14px;
  top: 0;
  font-size: 12px;
  font-weight: 600;
  line-height: 21.700px;
  letter-spacing: 0.050px;
  color: #1fcccc;
}
.legend {
  position: absolute;
  left: 14px;
  top: 0;
  display: flex;
  gap: 7px;
  font-size: 12px;
  font-weight: 600;
  line-height: 18px;
  white-space: nowrap;
}
.legend-macd .cy { letter-spacing: 0.050px; }
.legend-ivr { gap: 6px; }
.cy { color: #1fcccc; }
.k-gray { color: #a8a8a8; }
.k-blue { color: #1a4c90; }
.k-dred { color: #86151a; }
.k-green { color: #18d018; }
.k-red { color: #dc1414; }
.k-teal { color: #0f6c8c; }
.k-aqua { color: #2db8b8; }
.k-pink { color: #e05858; }

.tick {
  position: absolute;
  left: 3px;
  font-size: 12px;
  line-height: 18px;
  letter-spacing: 0.400px;
  color: #6f6f6f;
}
.badge {
  position: absolute;
  left: 2px;
  width: 45px;
  border-radius: 3px;
  font-size: 12px;
  line-height: 15px;
  letter-spacing: 0.400px;
  color: #000;
  text-align: center;
}
.b-red { top: 256px; height: 15px; background: #f2584e; }
.b-blue { top: 272px; height: 15px; background: #bce5f7; }
.b-yellow { top: 277px; height: 14px; background: #f5ea10; }
.b-gray { top: 345px; height: 16px; background: #cfcfcf; line-height: 16px; }
.vbadge {
  position: absolute;
  left: 2px;
  width: 66px;
  height: 16px;
  border-radius: 3px;
  font-size: 12px;
  line-height: 16px;
  text-align: center;
  color: #fff;
}
.v-red { background: #b40012; }
.v-blue { background: #0f4cb0; color: #bcd; }
.v-gray { background: #cfcfcf; color: #000; }
.v-teal { width: 59px; background: #12708c; }
.v-purple { width: 62px; background: #7a10bc; }
.v-dark { width: 59px; background: #b40012; }
.v-lime { height: 18px; background: #18c818; }
.v-bright { background: #f20000; color: #6c0000; height: 16px; }

.dates {
  position: relative;
  height: 24px;
  flex: none;
  box-sizing: border-box;
  border-top: 1px solid #9a9a9a;
  background: #242424;
}
.date-tick { position: absolute; top: 0; width: 1px; height: 5px; background: #8a8a8a; }
.date {
  position: absolute;
  top: 3px;
  font-size: 12px;
  line-height: 18px;
  color: #6c6c6c;
  white-space: nowrap;
}
.date-b { font-size: 11.500px; font-weight: 700; color: #848484; }
.scroll { height: 16px; flex: none; background: #333; display: flex; justify-content: space-between; }
.scroll-btn {
  width: 15px;
  height: 16px;
  box-sizing: border-box;
  border: 1px solid #5c5c5c;
  background: #2b2b2b;
  display: flex;
  align-items: center;
  justify-content: center;
}
</style>
